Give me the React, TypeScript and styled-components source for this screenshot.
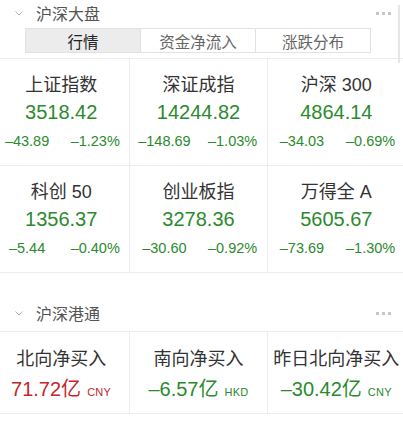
import React from "react";
import styled, { createGlobalStyle } from "styled-components";

const Global = createGlobalStyle`
  html, body { margin: 0; padding: 0; background: #fff; overflow: hidden; }
  body { font-family: "Liberation Sans", "Noto Sans CJK SC", sans-serif; }
  * { box-sizing: border-box; }
`;

const Page = styled.div`
  position: relative;
  width: 403px;
  height: 426px;
  overflow: hidden;
  background: #fff;
`;

const Scroll = styled.div`
  position: absolute;
  right: 3px;
  top: 5px;
  width: 2px;
  height: 58px;
  background: #e6e6e6;
`;

const SectionHeader = styled.div<{ $top: number; $height: number }>`
  display: flex;
  align-items: center;
  height: ${(p) => p.$height}px;
  margin-top: ${(p) => p.$top}px;
  padding: 0 12px 0 15px;
`;

const Title = styled.div`
  font-family: "Noto Sans CJK SC", sans-serif;
  font-size: 16px;
  color: #555;
  margin-left: 13px;
  flex: 1;
  line-height: 20px;
`;

const Dots = styled.div`
  display: flex;
  gap: 3px;
  span {
    width: 3px;
    height: 3px;
    background: #c6c6c6;
  }
`;

const Tabs = styled.div`
  display: flex;
  margin: 4px 0 0 25px;
  width: 346px;
  height: 25px;
  border: 1px solid #e2e2e2;
`;

const Tab = styled.div<{ $active?: boolean }>`
  flex: 1;
  display: flex;
  align-items: center;
  justify-content: center;
  font-family: "Noto Sans CJK SC", sans-serif;
  font-size: 15.5px;
  color: ${(p) => (p.$active ? "#222" : "#666")};
  background: ${(p) => (p.$active ? "#ececec" : "#fff")};
  & + & {
    border-left: 1px solid #e2e2e2;
  }
`;

const Grid = styled.div<{ $top: number }>`
  display: grid;
  grid-template-columns: repeat(3, 1fr);
  width: 412px;
  margin-left: -7px;
  margin-top: ${(p) => p.$top}px;
  border-top: 1px solid #ececec;
`;

const Cell = styled.div<{ $h: number; $pt: number }>`
  height: ${(p) => p.$h}px;
  padding-top: ${(p) => p.$pt}px;
  border-bottom: 1px solid #ececec;
  display: flex;
  flex-direction: column;
  align-items: center;
  &:not(:nth-child(3n)) {
    border-right: 1px solid #ececec;
  }
`;

const Name = styled.div`
  font-size: 18px;
  line-height: 24px;
  color: #333;
  white-space: pre;
`;

const Value = styled.div<{ $up?: boolean; $mt: number }>`
  font-size: 20px;
  line-height: 26px;
  margin-top: ${(p) => p.$mt}px;
  color: ${(p) => (p.$up ? "#c3272b" : "#2b8a2e")};
  white-space: nowrap;
`;

const Unit = styled.span`
  font-size: 11px;
  margin-left: 6px;
  letter-spacing: 0.3px;
`;

const Changes = styled.div`
  align-self: stretch;
  display: grid;
  grid-template-columns: 1fr 1fr;
  margin-top: 6px;
  font-size: 14.5px;
  line-height: 20px;
  color: #2b8a2e;
  span {
    text-align: center;
  }
`;

const Chevron = () => (
  <svg width="8" height="5" viewBox="0 0 8 5">
    <path d="M0.5 0.5 L4 4 L7.5 0.5" fill="none" stroke="#b0b0b0" strokeWidth="1" />
  </svg>
);

const indices = [
  ["上证指数", "3518.42", "–43.89", "–1.23%"],
  ["深证成指", "14244.82", "–148.69", "–1.03%"],
  ["沪深 300", "4864.14", "–34.03", "–0.69%"],
  ["科创 50", "1356.37", "–5.44", "–0.40%"],
  ["创业板指", "3278.36", "–30.60", "–0.92%"],
  ["万得全 A", "5605.67", "–73.69", "–1.30%"],
];

const flows = [
  { name: "北向净买入", value: "71.72亿", unit: "CNY", up: true },
  { name: "南向净买入", value: "–6.57亿", unit: "HKD", up: false },
  { name: "昨日北向净买入", value: "–30.42亿", unit: "CNY", up: false },
];

export default function App() {
  return (
    <Page>
      <Global />
      <Scroll />
      <SectionHeader $top={2} $height={22}>
        <Chevron />
        <Title>沪深大盘</Title>
        <Dots>
          <span />
          <span />
          <span />
        </Dots>
      </SectionHeader>
      <Tabs>
        <Tab $active>行情</Tab>
        <Tab>资金净流入</Tab>
        <Tab>涨跌分布</Tab>
      </Tabs>
      <Grid $top={5}>
        {indices.map(([n, v, c, p]) => (
          <Cell key={n} $h={107} $pt={14}>
            <Name>{n}</Name>
            <Value $mt={2}>{v}</Value>
            <Changes>
              <span>{c}</span>
              <span>{p}</span>
            </Changes>
          </Cell>
        ))}
      </Grid>
      <SectionHeader $top={22} $height={36}>
        <Chevron />
        <Title>沪深港通</Title>
        <Dots>
          <span />
          <span />
          <span />
        </Dots>
      </SectionHeader>
      <Grid $top={0}>
        {flows.map((f) => (
          <Cell key={f.name} $h={82} $pt={15}>
            <Name>{f.name}</Name>
            <Value $up={f.up} $mt={5}>
              {f.value}
              <Unit>{f.unit}</Unit>
            </Value>
          </Cell>
        ))}
      </Grid>
    </Page>
  );
}
